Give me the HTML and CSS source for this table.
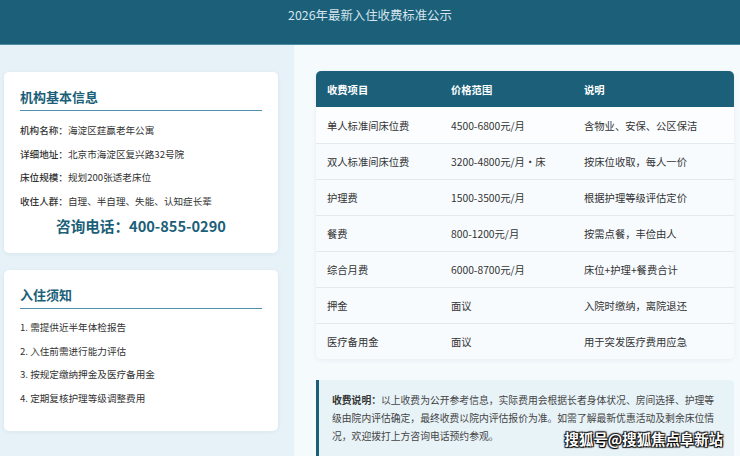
FILE: index.html
```html
<!DOCTYPE html>
<html lang="zh">
<head>
<meta charset="utf-8">
<link rel="stylesheet" href="styles.css">
</head>
<body>
<header class="top">
  <h1 class="top-title">2026年最新入住收费标准公示</h1>
</header>
<main class="layout">
  <aside class="side">
    <section class="card card-info">
      <h2 class="card-title">机构基本信息</h2>
      <ul class="info-list">
        <li><span class="lbl">机构名称：</span>海淀区莛赢老年公寓</li>
        <li><span class="lbl">详细地址：</span>北京市海淀区复兴路32号院</li>
        <li><span class="lbl">床位规模：</span>规划200张适老床位</li>
        <li><span class="lbl">收住人群：</span>自理、半自理、失能、认知症长辈</li>
      </ul>
      <p class="phone">咨询电话：400-855-0290</p>
    </section>
    <section class="card card-notice">
      <h2 class="card-title">入住须知</h2>
      <ol class="notice-list">
        <li>1. 需提供近半年体检报告</li>
        <li>2. 入住前需进行能力评估</li>
        <li>3. 按规定缴纳押金及医疗备用金</li>
        <li>4. 定期复核护理等级调整费用</li>
      </ol>
    </section>
  </aside>
  <section class="content">
    <table class="fees">
      <thead>
        <tr><th>收费项目</th><th>价格范围</th><th>说明</th></tr>
      </thead>
      <tbody>
        <tr><td>单人标准间床位费</td><td>4500-6800元/月</td><td>含物业、安保、公区保洁</td></tr>
        <tr><td>双人标准间床位费</td><td>3200-4800元/月·床</td><td>按床位收取，每人一价</td></tr>
        <tr><td>护理费</td><td>1500-3500元/月</td><td>根据护理等级评估定价</td></tr>
        <tr><td>餐费</td><td>800-1200元/月</td><td>按需点餐，丰俭由人</td></tr>
        <tr><td>综合月费</td><td>6000-8700元/月</td><td>床位+护理+餐费合计</td></tr>
        <tr><td>押金</td><td>面议</td><td>入院时缴纳，离院退还</td></tr>
        <tr><td>医疗备用金</td><td>面议</td><td>用于突发医疗费用应急</td></tr>
      </tbody>
    </table>
    <div class="note">
      <p><strong>收费说明：</strong>以上收费为公开参考信息，实际费用会根据长者身体状况、房间选择、护理等级由院内评估确定，最终收费以院内评估报价为准。如需了解最新优惠活动及剩余床位情况，欢迎拨打上方咨询电话预约参观。</p>
    </div>
  </section>
</main>
<div class="watermark">搜狐号@搜狐焦点阜新站</div>
</body>
</html>
```
FILE: styles.css
```css
* { box-sizing: border-box; margin: 0; padding: 0; }
html, body { width: 740px; height: 456px; overflow: hidden; }
body {
  font-family: "Noto Sans CJK SC", "Noto Sans", sans-serif;
  color: #333;
  background: #f5fafd;
  position: relative;
}
.top {
  height: 45px;
  background: #1b5f79;
  border-bottom: 1px solid #4d8ba3;
  padding-top: 6px;
  text-align: center;
}
.top-title {
  font-size: 12.4px;
  font-weight: 400;
  color: #d5e6ee;
  line-height: 18px;
}
.layout {
  display: grid;
  grid-template-columns: 294px 1fr;
  height: 411px;
}
.side {
  background: #e7f2f8;
  padding: 27px 16px 0 4px;
  display: flex;
  flex-direction: column;
  gap: 17px;
}
.card {
  background: #fff;
  border-radius: 5px;
  box-shadow: 0 1px 4px rgba(40, 90, 120, 0.08);
  padding: 16px 16px 0 16px;
}
.card-info { height: 181px; }
.card-notice { height: 161px; }
.card-title {
  font-size: 13px;
  font-weight: 700;
  color: #1b5f79;
  line-height: 18px;
  padding-bottom: 4px;
  border-bottom: 1.5px solid #4f8fab;
}
.info-list, .notice-list { list-style: none; }
.info-list { margin-top: 8px; }
.info-list li, .notice-list li {
  font-size: 9.6px;
  line-height: 23.5px;
  color: #333;
}
.lbl { font-weight: 500; }
.phone {
  margin-top: 3px;
  text-align: center;
  font-size: 14.6px;
  font-weight: 700;
  color: #1b5f79;
  line-height: 20px;
}
.notice-list { margin-top: 7px; }
.content {
  padding: 26px 6px 0 22px;
}
.fees {
  width: 418px;
  border-collapse: separate;
  border-spacing: 0;
  border-radius: 5px;
  overflow: hidden;
  box-shadow: 0 1px 4px rgba(40, 90, 120, 0.08);
  font-size: 10.3px;
}
.fees th {
  background: #1b5f79;
  color: #fff;
  font-weight: 700;
  text-align: left;
  height: 36px;
  padding: 0 11px;
}
.fees td {
  height: 36px;
  padding: 0 11px;
  background: #f7fbfe;
  border-top: 1px solid #e2eaef;
}
.fees tbody tr:first-child td { border-top: none; background: #fbfdff; }
.fees th:nth-child(1), .fees td:nth-child(1) { width: 124px; }
.fees th:nth-child(2), .fees td:nth-child(2) { width: 133px; }
.note {
  margin-top: 21px;
  background: #e8f3f8;
  border-left: 3px solid #1b5f79;
  border-radius: 0 4px 4px 0;
  padding: 11px 14px 14px 13px;
  height: 90px;
}
.note p {
  font-size: 9.8px;
  line-height: 18px;
  color: #444;
}
.note strong { font-weight: 700; color: #333; }
.watermark {
  position: absolute;
  right: 17px;
  bottom: 8px;
  font-size: 14.4px;
  font-weight: 700;
  color: #fff;
  text-shadow: 0 0 1px #000, 1px 1px 1px #000, -1px -1px 1px #222, 1px -1px 1px #222, -1px 1px 1px #222;
  line-height: 18px;
}
```
